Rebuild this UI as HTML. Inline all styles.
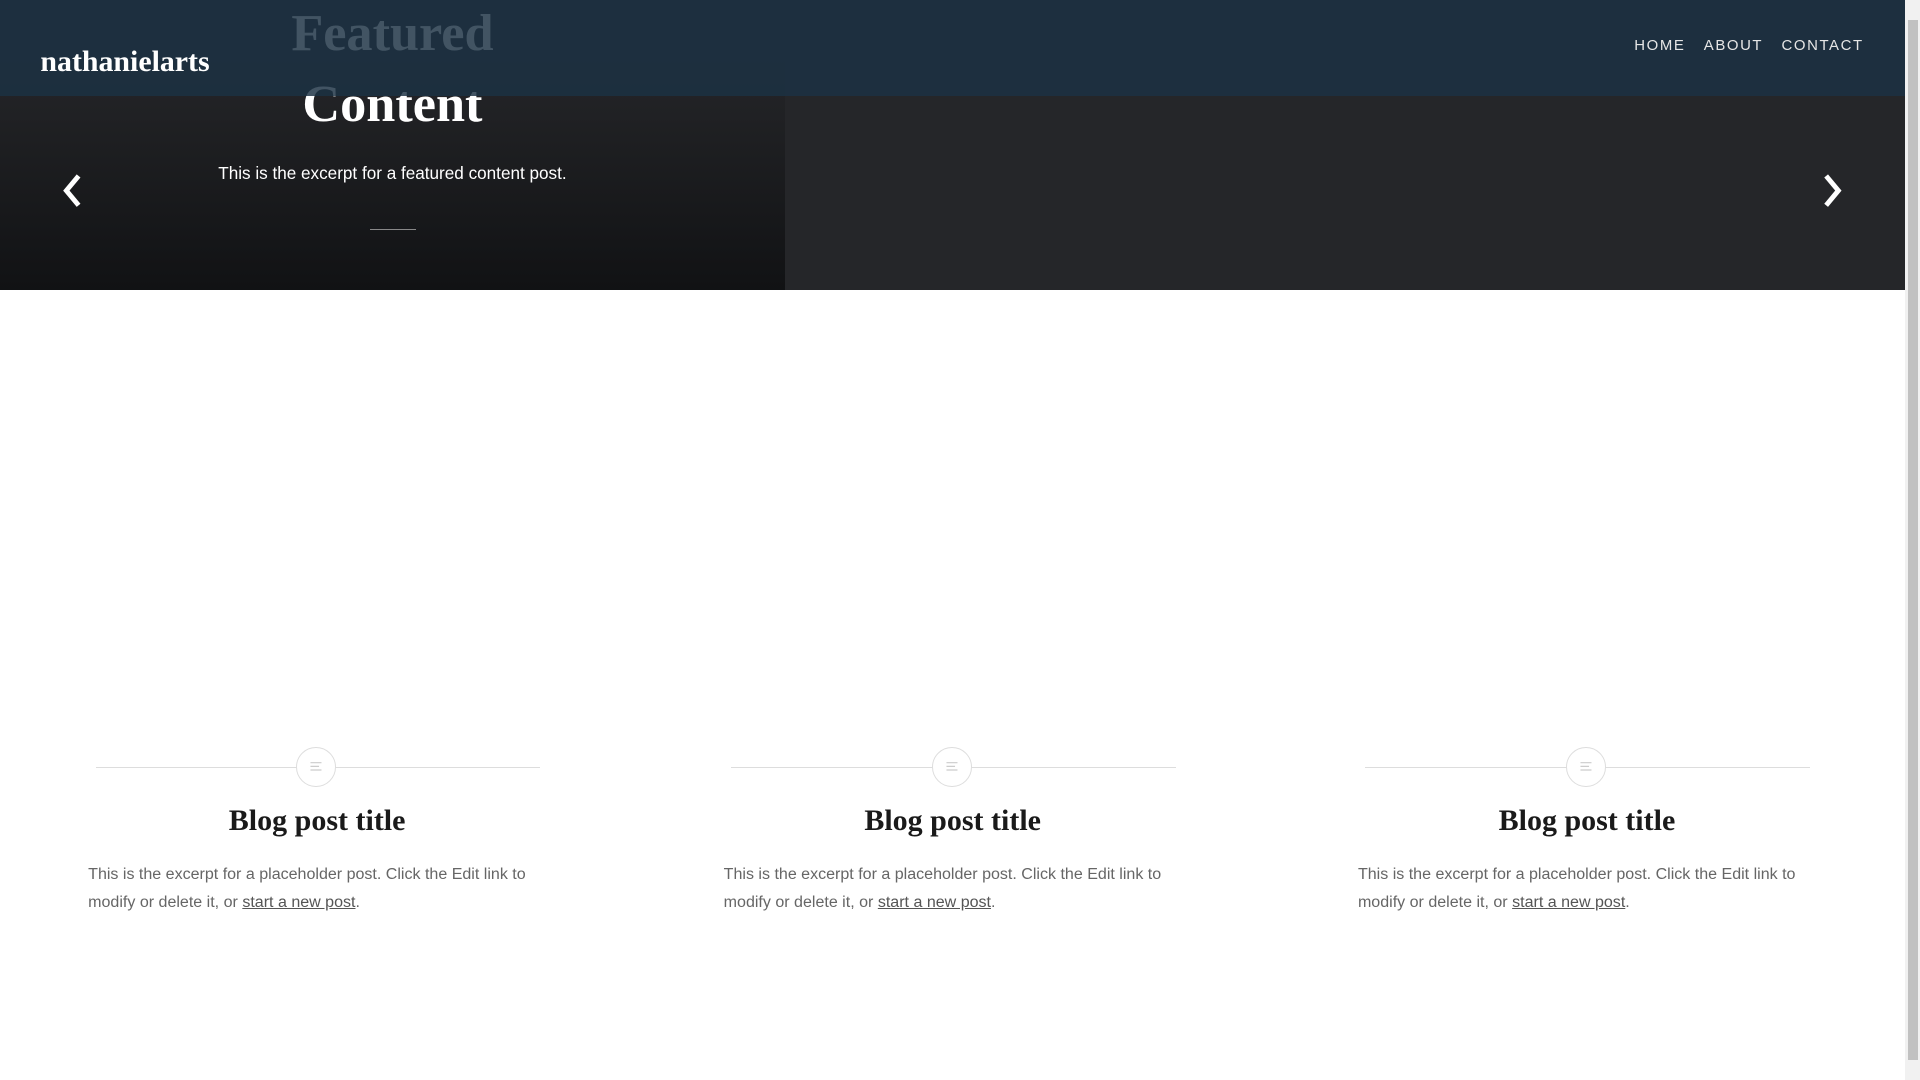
<!DOCTYPE html>
<html><head><meta charset="utf-8"><style>
html,body{margin:0;padding:0;overflow:hidden;background:#fff}
#w{zoom:1.22449;width:1568px;height:882px;position:relative;overflow:hidden;font-family:"Liberation Sans",sans-serif}
.hero{position:absolute;left:0;top:0;width:1556px;height:237px;background:#252629}
.lp{position:absolute;left:0;top:0;width:641px;height:237px;background:linear-gradient(#252629 20%,#111214)}
.ft{position:absolute;left:0;width:641px;text-align:center;font-family:"Liberation Serif",serif;font-weight:bold;font-size:42.7px;line-height:58px;color:#fff;top:-2px}
.ex{position:absolute;left:0;width:641px;text-align:center;top:133px;color:#fff;font-size:14px}
.ul{position:absolute;left:302px;top:187px;width:38px;height:1px;background:#888}
header{position:absolute;left:0;top:0;width:1556px;height:78px;background:rgba(28,49,67,0.83);z-index:2}
.logo{position:absolute;left:33px;top:34px;font-family:"Liberation Serif",serif;font-weight:bold;font-size:24.4px;color:#fff;line-height:32px}
nav{position:absolute;right:34px;top:30px;font-size:12.2px;letter-spacing:1.3px;color:#e6e6e6}
nav span{margin-left:15px}
.arr{position:absolute;top:140px}
.sb{position:absolute;left:1556px;top:0;width:12px;height:882px;background:#f1f1f1}
.th{position:absolute;left:2px;top:16px;width:8px;height:850px;background:#c1c1c1}
.card{position:absolute;top:610px;width:380px}
.line{position:absolute;left:6px;width:363px;top:16px;height:1px;background:#ddd}
.circ{position:absolute;left:170px;top:0;width:31px;height:31px;border:1px solid #ddd;border-radius:50%;background:#fff}
.ttl{position:absolute;top:44px;left:0;width:374px;text-align:center;font-family:"Liberation Serif",serif;font-weight:bold;font-size:24.5px;color:#1a1a1a;line-height:32px}
.txt{position:absolute;top:92px;left:0;width:375px;font-size:13.1px;line-height:23px;color:#666}
.txt u{color:#555}
</style></head><body><div id="w">
<div class="hero"><div class="lp"></div>
<div class="ft">Featured<br>Content</div>
<div class="ex">This is the excerpt for a featured content post.</div>
<div class="ul"></div>
<svg class="arr" style="left:48px" width="22" height="32" viewBox="0 0 22 32"><path d="M16 4 L6 16 L16 28" stroke="#fff" stroke-width="4" fill="none"/></svg>
<svg class="arr" style="left:1486px" width="22" height="32" viewBox="0 0 22 32"><path d="M5 4 L15 16 L5 28" stroke="#fff" stroke-width="4" fill="none"/></svg>
</div>
<header><div class="logo">nathanielarts</div><nav><span>HOME</span><span>ABOUT</span><span>CONTACT</span></nav></header>
<div class="card" style="left:72px"><div class="line"></div><div class="circ"><svg width="31" height="31"><path d="M11 12h9M11 15h7M11 18h9" stroke="#ccc" stroke-width="1"/></svg></div><div class="ttl">Blog post title</div><div class="txt">This is the excerpt for a placeholder post. Click the Edit link to modify or delete it, or <u>start a new post</u>.</div></div>
<div class="card" style="left:591px"><div class="line"></div><div class="circ"><svg width="31" height="31"><path d="M11 12h9M11 15h7M11 18h9" stroke="#ccc" stroke-width="1"/></svg></div><div class="ttl">Blog post title</div><div class="txt">This is the excerpt for a placeholder post. Click the Edit link to modify or delete it, or <u>start a new post</u>.</div></div>
<div class="card" style="left:1109px"><div class="line"></div><div class="circ"><svg width="31" height="31"><path d="M11 12h9M11 15h7M11 18h9" stroke="#ccc" stroke-width="1"/></svg></div><div class="ttl">Blog post title</div><div class="txt">This is the excerpt for a placeholder post. Click the Edit link to modify or delete it, or <u>start a new post</u>.</div></div>
<div class="sb"><div class="th"></div></div>
</div></body></html>
